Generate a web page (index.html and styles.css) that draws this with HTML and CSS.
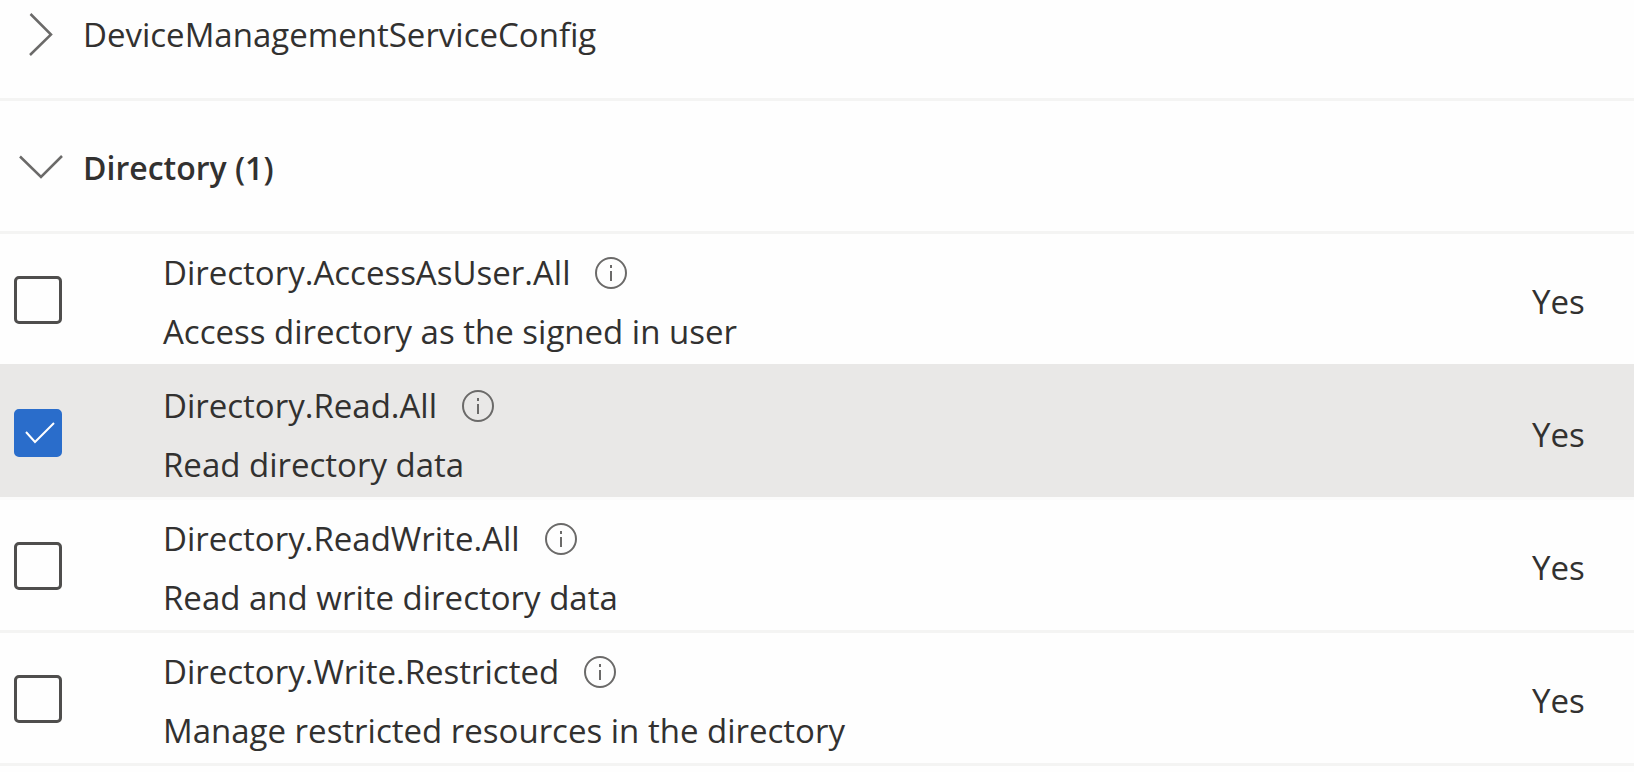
FILE: index.html
```
<!DOCTYPE html>
<html lang="en">
<head>
    <meta charset="UTF-8">
    <meta name="viewport" content="width=device-width, initial-scale=1.0">
    <title>API permissions</title>
    <link rel="stylesheet" href="styles.css">
</head>
<body>
    <table class="permissions">
        <colgroup>
            <col class="col-check">
            <col>
            <col class="col-consent">
        </colgroup>
        <tbody>
            <tr class="group-row first">
                <td colspan="3">
                    <button class="group-btn" type="button" aria-expanded="false">
                        <svg class="chevron" viewBox="0 0 44 44"><path d="M11.500 1 L32 21.500 L11 42"/></svg>
                        <span>DeviceManagementServiceConfig</span>
                    </button>
                </td>
            </tr>
            <tr class="group-row">
                <td colspan="3">
                    <button class="group-btn open" type="button" aria-expanded="true">
                        <svg class="chevron" viewBox="0 0 44 44"><path d="M1 10.500 L22 31 L43 10"/></svg>
                        <span>Directory (1)</span>
                    </button>
                </td>
            </tr>
            <tr class="perm-row">
                <td><input class="check" type="checkbox" id="access-as-user"></td>
                <td>
                    <div class="perm-name">
                        <label for="access-as-user">Directory.AccessAsUser.All</label>
                        <svg class="info" viewBox="0 0 32 32"><circle cx="16" cy="16" r="15"/><path d="M16 14V24M16 8V11"/></svg>
                    </div>
                    <div class="perm-desc">Access directory as the signed in user</div>
                </td>
                <td class="consent">Yes</td>
            </tr>
            <tr class="perm-row selected">
                <td><input class="check" type="checkbox" id="read-all" checked></td>
                <td>
                    <div class="perm-name">
                        <label for="read-all">Directory.Read.All</label>
                        <svg class="info" viewBox="0 0 32 32"><circle cx="16" cy="16" r="15"/><path d="M16 14V24M16 8V11"/></svg>
                    </div>
                    <div class="perm-desc">Read directory data</div>
                </td>
                <td class="consent">Yes</td>
            </tr>
            <tr class="perm-row">
                <td><input class="check" type="checkbox" id="read-write-all"></td>
                <td>
                    <div class="perm-name">
                        <label for="read-write-all">Directory.ReadWrite.All</label>
                        <svg class="info" viewBox="0 0 32 32"><circle cx="16" cy="16" r="15"/><path d="M16 14V24M16 8V11"/></svg>
                    </div>
                    <div class="perm-desc">Read and write directory data</div>
                </td>
                <td class="consent">Yes</td>
            </tr>
            <tr class="perm-row last">
                <td><input class="check" type="checkbox" id="write-restricted"></td>
                <td>
                    <div class="perm-name">
                        <label for="write-restricted">Directory.Write.Restricted</label>
                        <svg class="info" viewBox="0 0 32 32"><circle cx="16" cy="16" r="15"/><path d="M16 14V24M16 8V11"/></svg>
                    </div>
                    <div class="perm-desc">Manage restricted resources in the directory</div>
                </td>
                <td class="consent">Yes</td>
            </tr>
        </tbody>
    </table>
</body>
</html>
```
FILE: styles.css
```
* {
    box-sizing: border-box;
}

body {
    margin: 0;
    background-color: #fefefe;
    color: #323130;
    font-family: "Segoe UI", "Open Sans", "Noto Sans", sans-serif;
    font-size: 33px;
    line-height: 59px;
}

.permissions {
    width: 100%;
    table-layout: fixed;
    border-collapse: separate;
    border-spacing: 0;
}

.col-check {
    width: 163px;
}

.col-consent {
    width: 102px;
}

td {
    height: 133px;
    padding: 0;
    border-top: 3px solid #f4f4f3;
    vertical-align: top;
}

/* group headers */
.first td {
    height: 98px;
    border-top: none;
}

.group-btn {
    display: flex;
    align-items: center;
    gap: 20px;
    width: 100%;
    padding: 37px 0 0 19px;
    border: none;
    background: none;
    color: inherit;
    font: inherit;
    text-align: left;
    cursor: pointer;
}

.first .group-btn {
    padding-top: 5px;
}

.group-btn.open {
    font-size: 32px;
    font-weight: 600;
}

.chevron {
    width: 44px;
    height: 44px;
    fill: none;
    stroke: #6b6a69;
    stroke-width: 2.5;
}

/* permissions */
.check {
    appearance: none;
    display: block;
    width: 48px;
    height: 48px;
    margin: 42px 0 0 14px;
    border: 3px solid #4f4e4d;
    border-radius: 5px;
    background-color: #fefefe;
}

.check:checked {
    border-color: #2a6dcb;
    background: #2a6dcb url("data:image/svg+xml,%3Csvg xmlns='http://www.w3.org/2000/svg' viewBox='0 0 44 44'%3E%3Cpath d='M10 21 L19 31 L38 12' fill='none' stroke='%23fff' stroke-width='2'/%3E%3C/svg%3E") center / 44px 44px no-repeat;
}

.perm-name {
    display: flex;
    align-items: center;
    gap: 25px;
    padding-top: 9px;
}

.info {
    width: 32px;
    height: 32px;
    fill: none;
    stroke: #6b6a69;
    stroke-width: 2;
}

.consent {
    padding-top: 38px;
}

.selected td {
    border-color: #e9e8e7;
    background-color: #e9e8e7;
}

.selected + .perm-row td {
    border-color: #fbfbfb;
}

.last td {
    height: 136px;
    border-bottom: 3px solid #f4f4f3;
}
```
